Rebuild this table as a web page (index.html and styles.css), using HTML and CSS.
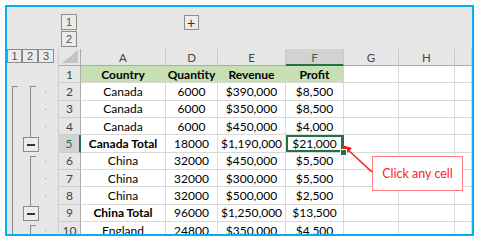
FILE: index.html
```html
<!DOCTYPE html>
<html>
<head>
<meta charset="utf-8">
<link rel="stylesheet" href="styles.css">
</head>
<body>
<div class="frame">
  <div class="sheet">
    <div class="band"></div>
    <div class="band colbtns"><span class="obtn">1</span><span class="obtn">2</span></div>
    <div class="band"></div>
    <div class="band plus"><span class="obtn">+</span></div>
    <div class="band"></div>
    <div class="band"></div>
    <div class="band"></div>
    <div class="band"></div>
    <div class="band"></div>

    <div class="levels"><span class="obtn">1</span><span class="obtn">2</span><span class="obtn">3</span></div>
    <div class="corner"><svg width="16" height="13" viewBox="0 0 16 13"><polygon points="16,0 16,13 0,13" fill="#c4c4c4"/></svg></div>
    <div class="ch">A</div>
    <div class="ch">D</div>
    <div class="ch">E</div>
    <div class="ch ch-sel">F</div>
    <div class="ch">G</div>
    <div class="ch">H</div>
    <div class="ch"></div>

    <div class="outline">
      <svg width="51" height="175" viewBox="0 0 51 175">
        <g stroke="#8a8a8a" stroke-width="1" fill="none" shape-rendering="crispEdges">
          <path d="M10.5 20.5 H5.5 V175"/>
          <path d="M28.5 20.5 H23.5 V71"/>
          <path d="M28.5 90.5 H23.5 V140"/>
          <path d="M28.5 159.5 H23.5 V175"/>
        </g>
        <g fill="#999">
          <rect x="38" y="26" width="1" height="1"/>
          <rect x="38" y="43" width="1" height="1"/>
          <rect x="38" y="60" width="1" height="1"/>
          <rect x="38" y="95" width="1" height="1"/>
          <rect x="38" y="112" width="1" height="1"/>
          <rect x="38" y="130" width="1" height="1"/>
          <rect x="38" y="164" width="1" height="1"/>
        </g>
        <g shape-rendering="crispEdges">
          <rect x="16.5" y="71.5" width="15" height="14" fill="#ececec" stroke="#8a8a8a"/>
          <rect x="20" y="78" width="8" height="1.5" fill="#333"/>
          <rect x="16.5" y="140.5" width="15" height="14" fill="#ececec" stroke="#8a8a8a"/>
          <rect x="20" y="147" width="8" height="1.5" fill="#333"/>
        </g>
      </svg>
    </div>

    <div class="rh">1</div>
    <div class="c g b">Country</div><div class="c g b">Quantity</div><div class="c g b">Revenue</div><div class="c g b">Profit</div><div class="c"></div><div class="c"></div><div class="c"></div>

    <div class="rh">2</div>
    <div class="c">Canada</div><div class="c">6000</div><div class="c">$390,000</div><div class="c">$8,500</div><div class="c"></div><div class="c"></div><div class="c"></div>

    <div class="rh">3</div>
    <div class="c">Canada</div><div class="c">6000</div><div class="c">$350,000</div><div class="c">$8,500</div><div class="c"></div><div class="c"></div><div class="c"></div>

    <div class="rh">4</div>
    <div class="c">Canada</div><div class="c">6000</div><div class="c">$450,000</div><div class="c">$4,000</div><div class="c"></div><div class="c"></div><div class="c"></div>

    <div class="rh rh-sel">5</div>
    <div class="c b">Canada Total</div><div class="c">18000</div><div class="c">$1,190,000</div><div class="c sel">$21,000<span class="handle"></span></div><div class="c"></div><div class="c"></div><div class="c"></div>

    <div class="rh">6</div>
    <div class="c">China</div><div class="c">32000</div><div class="c">$450,000</div><div class="c">$5,500</div><div class="c"></div><div class="c"></div><div class="c"></div>

    <div class="rh">7</div>
    <div class="c">China</div><div class="c">32000</div><div class="c">$300,000</div><div class="c">$5,500</div><div class="c"></div><div class="c"></div><div class="c"></div>

    <div class="rh">8</div>
    <div class="c">China</div><div class="c">32000</div><div class="c">$500,000</div><div class="c">$2,500</div><div class="c"></div><div class="c"></div><div class="c"></div>

    <div class="rh">9</div>
    <div class="c b">China Total</div><div class="c">96000</div><div class="c">$1,250,000</div><div class="c">$13,500</div><div class="c"></div><div class="c"></div><div class="c"></div>

    <div class="rh">10</div>
    <div class="c">England</div><div class="c">24800</div><div class="c">$350,000</div><div class="c">$4,500</div><div class="c"></div><div class="c"></div><div class="c"></div>
  </div>

  <div class="callout">Click any cell</div>
  <svg class="arrow" width="465" height="227" viewBox="0 0 465 227">
    <line x1="365" y1="165" x2="340" y2="142" stroke="#ff1a1a" stroke-width="1.6"/>
    <polygon points="335,138 345,141 339,147" fill="#ff1a1a"/>
  </svg>
</div>
</body>
</html>
```

FILE: styles.css
```css
html, body {
  margin: 0;
  padding: 0;
  background: #ffffff;
}

body {
  padding: 5px 0 0 5px;
  font-family: "Lato", "Liberation Sans", sans-serif;
}

.frame {
  position: relative;
  width: 465px;
  height: 227px;
  border: 2px solid #00b0f0;
  background: #e6e6e6;
  overflow: hidden;
}

.sheet {
  display: grid;
  grid-template-columns: 51px 23px 85px 52px 68px 58px 55px 56px 1fr;
  grid-template-rows: 42px 17px repeat(10, 17.33px);
  width: 465px;
  height: 227px;
  overflow: hidden;
}

.band {
  background: #e6e6e6;
}

.obtn {
  box-sizing: border-box;
  width: 16px;
  height: 16px;
  border: 1px solid #8c8c8c;
  background: #ebebeb;
  color: #555;
  font-family: "Liberation Sans", sans-serif;
  font-size: 11px;
  display: flex;
  align-items: center;
  justify-content: center;
  line-height: 1;
}

.colbtns {
  display: flex;
  flex-direction: column;
  align-items: flex-start;
  gap: 1px;
  padding: 7px 0 0 3px;
}

.plus {
  display: flex;
  justify-content: center;
  padding-top: 8px;
}

.plus .obtn {
  width: 15px;
  height: 15px;
  font-size: 14px;
  color: #333;
  margin-left: -2px;
}

.levels {
  display: flex;
  align-items: flex-start;
  padding-top: 0;
  background: #e6e6e6;
}

.levels .obtn {
  width: 16px;
  height: 14px;
  font-size: 11px;
}

.levels .obtn:first-child {
  width: 15px;
}

.corner {
  box-sizing: border-box;
  background: #e6e6e6;
  border-left: 1px solid #cfcfcf;
  border-right: 1px solid #ababab;
  border-bottom: 1px solid #ababab;
  display: flex;
  align-items: flex-end;
  justify-content: flex-end;
  padding: 0 2px 2px 0;
}

.ch {
  box-sizing: border-box;
  background: #e6e6e6;
  border-right: 1px solid #c9c9c9;
  border-bottom: 1px solid #ababab;
  color: #444;
  font-size: 11.5px;
  display: flex;
  align-items: center;
  justify-content: center;
  padding-top: 1px;
}

.ch-sel {
  background: #d2d2d2;
  border-bottom: 2px solid #217346;
  color: #217346;
}

.outline {
  grid-column: 1;
  grid-row: 3 / span 10;
  background: #e6e6e6;
  overflow: hidden;
}

.outline svg {
  display: block;
}

.rh {
  box-sizing: border-box;
  background: #e6e6e6;
  border-left: 1px solid #cfcfcf;
  border-right: 1px solid #ababab;
  border-bottom: 1px solid #cdcdcd;
  color: #444;
  font-size: 12px;
  display: flex;
  align-items: center;
  justify-content: center;
}

.rh-sel {
  background: #d2d2d2;
  border-right: 2px solid #217346;
  color: #217346;
}

.c {
  box-sizing: border-box;
  background: #ffffff;
  border-right: 1px solid #d9d9d9;
  border-bottom: 1px solid #d9d9d9;
  color: #000;
  font-size: 12px;
  display: flex;
  align-items: center;
  justify-content: center;
  white-space: nowrap;
}

.c.g {
  background: #c6e0b4;
  border-right-color: #c6e0b4;
}

.c.b {
  font-weight: bold;
}

.c.sel {
  position: relative;
  box-shadow: inset 0 0 0 2px #217346;
  border-right-color: #217346;
}

.handle {
  position: absolute;
  right: -4px;
  bottom: -4px;
  width: 5px;
  height: 5px;
  background: #217346;
  border: 1px solid #ffffff;
  z-index: 2;
}

.callout {
  position: absolute;
  left: 365px;
  top: 149px;
  width: 91px;
  height: 35px;
  box-sizing: border-box;
  background: #ffffff;
  border: 1px solid #ff7c80;
  color: #ff1a1a;
  font-size: 12.5px;
  display: flex;
  align-items: center;
  justify-content: center;
}

.arrow {
  position: absolute;
  left: 0;
  top: 0;
  pointer-events: none;
}
```
